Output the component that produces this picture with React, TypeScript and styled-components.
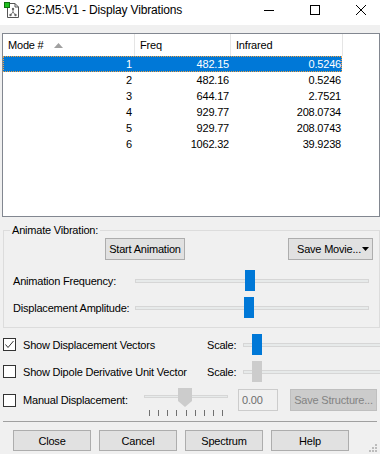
import React from 'react';
import styled, { createGlobalStyle } from 'styled-components';

const GlobalStyle = createGlobalStyle`
  html, body {
    margin: 0;
    padding: 0;
    background: #f0f0f0;
  }
  body {
    font-family: "Liberation Sans", Arial, sans-serif;
    font-size: 11px;
    letter-spacing: -0.2px;
    color: #000;
  }
  * { box-sizing: border-box; }
`;

const Window = styled.div`
  position: relative;
  width: 380px;
  height: 454px;
  overflow: hidden;
  display: flex;
  flex-direction: column;
  background: #f0f0f0;
`;

const TitleBar = styled.div`
  height: 25px;
  flex: none;
  display: flex;
  align-items: flex-start;
  background: #ffffff;
`;

const AppIcon = styled.svg`
  flex: none;
  margin: 2px 0 0 4px;
`;

const Title = styled.div`
  margin: 3px 0 0 6px;
  font-size: 12px;
  line-height: 15px;
  letter-spacing: -0.15px;
  white-space: nowrap;
`;

const CaptionGroup = styled.div`
  display: flex;
  margin-left: auto;
  margin-right: -4px;
  flex: none;
`;

const CaptionButton = styled.div`
  width: 46px;
  height: 20px;
  display: flex;
  align-items: center;
  justify-content: center;
`;

const ListView = styled.div`
  flex: none;
  margin: 8px 0 0 2px;
  width: 378px;
  height: 184px;
  border: 1px solid #828790;
  background: #ffffff;
`;

const HeaderRow = styled.div`
  display: flex;
  height: 22px;
`;

const HeaderCell = styled.div<{ $w: number }>`
  width: ${p => p.$w}px;
  flex: none;
  display: flex;
  align-items: center;
  padding-left: 5px;
  border-right: 1px solid #e5e5e5;
  color: #000;
`;

const SortArrow = styled.svg`
  margin-left: 10px;
`;

const Row = styled.div<{ $selected?: boolean }>`
  display: flex;
  height: 16px;
  width: 339px;
  align-items: center;
  background: ${p => (p.$selected ? '#0078d7' : 'transparent')};
  color: ${p => (p.$selected ? '#ffffff' : '#000000')};
  outline: ${p => (p.$selected ? '1px dotted #f0a040' : 'none')};
  outline-offset: -1px;
`;

const Cell = styled.div<{ $w: number; $pr: number }>`
  width: ${p => p.$w}px;
  flex: none;
  text-align: right;
  padding-right: ${p => p.$pr}px;
`;

const Group = styled.fieldset`
  margin: 7px 0 0 3px;
  padding: 0 0 9px 0;
  width: 377px;
  min-width: 0;
  border: 1px solid #dcdcdc;
  flex: none;
`;

const Legend = styled.legend`
  margin-left: 6px;
  padding: 0 2px;
  line-height: 13px;
`;

const GroupButtons = styled.div`
  display: flex;
  margin-top: 1px;
  height: 22px;
  padding-left: 101px;
  padding-right: 6px;
`;

const Button = styled.div<{ $w: number; $disabled?: boolean }>`
  width: ${p => p.$w}px;
  height: 100%;
  flex: none;
  display: flex;
  align-items: center;
  justify-content: center;
  background: ${p => (p.$disabled ? '#cccccc' : '#e1e1e1')};
  border: 1px solid ${p => (p.$disabled ? '#bfbfbf' : '#adadad')};
  color: ${p => (p.$disabled ? '#838383' : '#000000')};
  white-space: nowrap;
`;

const MenuButton = styled(Button)`
  margin-left: auto;
  justify-content: space-between;
  padding: 0 3px 0 8px;
`;

const SliderRow = styled.div<{ $mt: number }>`
  display: flex;
  align-items: center;
  height: 21px;
  margin-top: ${p => p.$mt}px;
  padding-left: 9px;
`;

const SliderLabel = styled.div<{ $w: number }>`
  width: ${p => p.$w}px;
  flex: none;
  white-space: nowrap;
`;

const SliderBox = styled.div<{ $w: number }>`
  position: relative;
  width: ${p => p.$w}px;
  height: 21px;
  flex: none;
  display: flex;
  align-items: center;
`;

const Track = styled.div`
  width: 100%;
  height: 4px;
  background: #e7eaea;
  border: 1px solid #d6d6d6;
`;

const Thumb = styled.div<{ $disabled?: boolean }>`
  position: absolute;
  top: 0;
  width: 10px;
  height: 21px;
  background: ${p => (p.$disabled ? '#cccccc' : '#0078d7')};
`;

const OptionRow = styled.div<{ $mt: number; $h: number }>`
  display: flex;
  align-items: center;
  height: ${p => p.$h}px;
  margin-top: ${p => p.$mt}px;
  padding-left: 3px;
  flex: none;
`;

const CheckBox = styled.div`
  width: 13px;
  height: 13px;
  flex: none;
  border: 1px solid #333333;
  background: #ffffff;
  display: flex;
  align-items: center;
  justify-content: center;
`;

const OptionLabel = styled.div<{ $w: number }>`
  width: ${p => p.$w}px;
  margin-left: 7px;
  flex: none;
  white-space: nowrap;
`;

const ScaleLabel = styled.div`
  width: 36px;
  flex: none;
`;

const ManualSlider = styled.div`
  position: relative;
  align-self: flex-start;
  width: 84px;
  height: 28px;
  flex: none;
  padding-top: 7px;
`;

const ThinTrack = styled.div`
  height: 3px;
  background: #e7eaea;
  border: 1px solid #d6d6d6;
`;

const PointerThumb = styled.svg`
  position: absolute;
  top: 0;
`;

const Ticks = styled.div`
  display: flex;
  justify-content: space-between;
  padding: 0 5px;
  margin-top: 12px;
`;

const Tick = styled.div`
  width: 1px;
  height: 6px;
  background: #707070;
`;

const TextBox = styled.div`
  width: 40px;
  height: 22px;
  margin-left: 10px;
  flex: none;
  border: 1px solid #cccccc;
  background: #f0f0f0;
  color: #6d6d6d;
  display: flex;
  align-items: center;
  padding-left: 3px;
`;

const StructureButton = styled(Button)`
  margin-left: 12px;
  height: 22px;
`;

const Separator = styled.div`
  margin: 9px 0 0 3px;
  width: 374px;
  height: 1px;
  background: #a0a0a0;
  flex: none;
`;

const ButtonBar = styled.div`
  display: flex;
  gap: 8px;
  height: 21px;
  margin-top: 8px;
  padding-left: 13px;
  flex: none;
`;

const Grip = styled.svg`
  position: absolute;
  right: 3px;
  bottom: 2px;
`;

const columns = [
  { title: 'Mode #', w: 132, pr: 3 },
  { title: 'Freq', w: 96, pr: 2 },
  { title: 'Infrared', w: 112, pr: 2 },
];

const modes = [
  ['1', '482.15', '0.5246'],
  ['2', '482.16', '0.5246'],
  ['3', '644.17', '2.7521'],
  ['4', '929.77', '208.0734'],
  ['5', '929.77', '208.0743'],
  ['6', '1062.32', '39.9238'],
];

const Slider: React.FC<{ width: number; pos: number; disabled?: boolean }> = ({ width, pos, disabled }) => (
  <SliderBox $w={width}>
    <Track />
    <Thumb $disabled={disabled} style={{ left: pos }} />
  </SliderBox>
);

const Check: React.FC<{ checked?: boolean }> = ({ checked }) => (
  <CheckBox>
    {checked && (
      <svg width="11" height="11" viewBox="0 0 11 11">
        <polyline points="1.5,5.5 4,8.5 9.5,2" fill="none" stroke="#333" strokeWidth="1" />
      </svg>
    )}
  </CheckBox>
);

export default function App() {
  return (
    <Window>
      <GlobalStyle />
      <TitleBar>
        <AppIcon width="16" height="16" viewBox="0 0 16 16">
          <path d="M3.5 1.5 H11 L14.5 5 V15.5 H3.5 Z" fill="#fff" stroke="#555" />
          <path d="M11 1.5 V5 H14.5" fill="none" stroke="#555" />
          <line x1="9" y1="7" x2="9" y2="10" stroke="#777" />
          <line x1="9" y1="10" x2="6.5" y2="13" stroke="#777" />
          <line x1="9" y1="10" x2="11.5" y2="13" stroke="#777" />
          <circle cx="9" cy="7" r="1.2" fill="#666" />
          <circle cx="6.5" cy="13" r="1.2" fill="#666" />
          <circle cx="11.5" cy="13" r="1.2" fill="#666" />
          <rect x="0.5" y="0.5" width="5" height="5" fill="#20c020" stroke="#107010" />
        </AppIcon>
        <Title>G2:M5:V1 - Display Vibrations</Title>
        <CaptionGroup>
          <CaptionButton>
            <svg width="10" height="10" viewBox="0 0 10 10">
              <line x1="0" y1="5.5" x2="10" y2="5.5" stroke="#000" />
            </svg>
          </CaptionButton>
          <CaptionButton>
            <svg width="10" height="10" viewBox="0 0 10 10">
              <rect x="0.5" y="0.5" width="9" height="9" fill="none" stroke="#000" />
            </svg>
          </CaptionButton>
          <CaptionButton>
            <svg width="10" height="10" viewBox="0 0 10 10">
              <path d="M0 0 L10 10 M10 0 L0 10" stroke="#000" />
            </svg>
          </CaptionButton>
        </CaptionGroup>
      </TitleBar>

      <ListView>
        <HeaderRow>
          {columns.map((c, i) => (
            <HeaderCell key={c.title} $w={c.w}>
              {c.title}
              {i === 0 && (
                <SortArrow width="9" height="5" viewBox="0 0 9 5">
                  <path d="M0 5 L4.5 0 L9 5 Z" fill="#a0a0a0" />
                </SortArrow>
              )}
            </HeaderCell>
          ))}
        </HeaderRow>
        {modes.map((m, r) => (
          <Row key={m[0]} $selected={r === 0}>
            {m.map((v, i) => (
              <Cell key={i} $w={columns[i].w} $pr={columns[i].pr}>
                {v}
              </Cell>
            ))}
          </Row>
        ))}
      </ListView>

      <Group>
        <Legend>Animate Vibration:</Legend>
        <GroupButtons>
          <Button $w={80}>Start Animation</Button>
          <MenuButton $w={85}>
            Save Movie...
            <svg width="7" height="4" viewBox="0 0 7 4">
              <path d="M0 0 H7 L3.5 4 Z" fill="#000" />
            </svg>
          </MenuButton>
        </GroupButtons>
        <SliderRow $mt={10}>
          <SliderLabel $w={122}>Animation Frequency:</SliderLabel>
          <Slider width={234} pos={110} />
        </SliderRow>
        <SliderRow $mt={6}>
          <SliderLabel $w={122}>Displacement Amplitude:</SliderLabel>
          <Slider width={234} pos={109} />
        </SliderRow>
      </Group>

      <OptionRow $mt={6} $h={21}>
        <Check checked />
        <OptionLabel $w={184}>Show Displacement Vectors</OptionLabel>
        <ScaleLabel>Scale:</ScaleLabel>
        <Slider width={140} pos={9} />
      </OptionRow>
      <OptionRow $mt={6} $h={21}>
        <Check />
        <OptionLabel $w={184}>Show Dipole Derivative Unit Vector</OptionLabel>
        <ScaleLabel>Scale:</ScaleLabel>
        <Slider width={140} pos={9} disabled />
      </OptionRow>
      <OptionRow $mt={6} $h={24}>
        <Check />
        <OptionLabel $w={121}>Manual Displacement:</OptionLabel>
        <ManualSlider>
          <ThinTrack />
          <PointerThumb width="14" height="19" viewBox="0 0 14 19" style={{ left: 34 }}>
            <path d="M0 0 H14 V13 L7 19 L0 13 Z" fill="#cccccc" />
          </PointerThumb>
          <Ticks>
            {Array.from({ length: 9 }).map((_, i) => (
              <Tick key={i} />
            ))}
          </Ticks>
        </ManualSlider>
        <TextBox>0.00</TextBox>
        <StructureButton $w={87} $disabled>
          Save Structure...
        </StructureButton>
      </OptionRow>

      <Separator />

      <ButtonBar>
        <Button $w={78}>Close</Button>
        <Button $w={78}>Cancel</Button>
        <Button $w={78}>Spectrum</Button>
        <Button $w={78}>Help</Button>
      </ButtonBar>

      <Grip width="10" height="10" viewBox="0 0 10 10">
        <rect x="8" y="2" width="2" height="2" fill="#bcbcbc" />
        <rect x="5" y="5" width="2" height="2" fill="#bcbcbc" />
        <rect x="8" y="5" width="2" height="2" fill="#bcbcbc" />
        <rect x="2" y="8" width="2" height="2" fill="#bcbcbc" />
        <rect x="5" y="8" width="2" height="2" fill="#bcbcbc" />
        <rect x="8" y="8" width="2" height="2" fill="#bcbcbc" />
      </Grip>
    </Window>
  );
}
